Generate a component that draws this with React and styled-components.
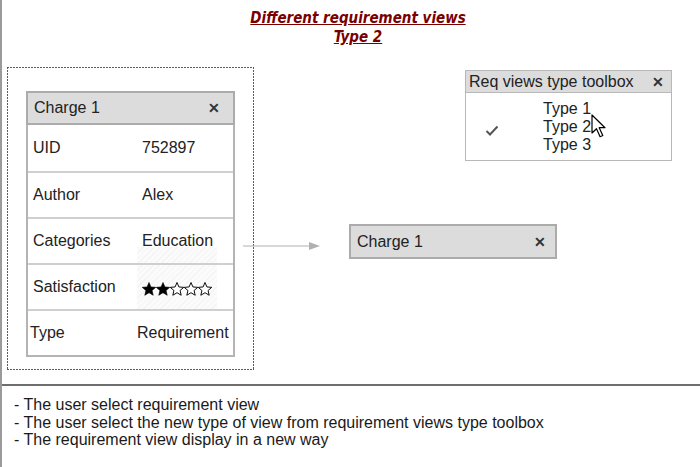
import React from "react";
import styled, { createGlobalStyle } from "styled-components";

const GlobalStyle = createGlobalStyle`
  html, body {
    margin: 0;
    padding: 0;
    background: #fff;
  }
  body {
    font-family: "Liberation Sans", Arial, sans-serif;
    color: #1a1a1a;
  }
`;

const Frame = styled.div`
  width: 700px;
  height: 467px;
  box-sizing: border-box;
  border-left: 2px solid #9a9a9a;
  display: flex;
  flex-direction: column;
  overflow: hidden;
`;

const Title = styled.h1`
  margin: 0;
  padding-top: 9px;
  height: 67px;
  box-sizing: border-box;
  text-align: center;
  padding-left: 14px;
  font-family: "Liberation Sans Narrow", "DejaVu Sans Condensed", "Liberation Sans", sans-serif;
  font-size: 15px;
  font-style: italic;
  font-weight: bold;
  line-height: 19px;
  color: #7a0000;
  text-decoration: underline;
`;

const Canvas = styled.div`
  height: 317px;
  display: flex;
  align-items: flex-start;
`;

const dotColor = "rgb(72, 72, 255)";

const DashedBox = styled.div`
  margin-left: 5px;
  width: 247px;
  height: 303px;
  flex: none;
  box-sizing: border-box;
  padding: 24px 0 0 19px;
  background-image:
    repeating-linear-gradient(to right, ${dotColor} 0px, ${dotColor} 2px, #fff 2px, #fff 3px),
    repeating-linear-gradient(to right, ${dotColor} 0px, ${dotColor} 2px, #fff 2px, #fff 3px),
    repeating-linear-gradient(to bottom, ${dotColor} 0px, ${dotColor} 2px, #fff 2px, #fff 3px),
    repeating-linear-gradient(to bottom, ${dotColor} 0px, ${dotColor} 2px, #fff 2px, #fff 3px);
  background-size: 100% 1px, 100% 1px, 1px 100%, 1px 100%;
  background-position: left top, left bottom, left top, right top;
  background-repeat: no-repeat;
`;

const Card = styled.div`
  width: 209px;
  box-sizing: border-box;
  border: 2px solid #b4b4b4;
  border-top: none;
  background: #fff;
`;

const CardHeader = styled.div`
  margin: 0 -2px;
  height: 34px;
  box-sizing: border-box;
  display: flex;
  align-items: center;
  justify-content: space-between;
  padding: 0 13px 0 6px;
  background: #dcdcdc;
  border: 2px solid #ababab;
  font-size: 16px;
  color: #222;
`;

const Close = styled.span`
  font-size: 14px;
  font-weight: bold;
  color: #333;
`;

const Row = styled.div`
  height: 46px;
  display: flex;
  align-items: center;
  border-top: ${(p) => (p.$first ? "none" : "2px solid #cfcfcf")};
  box-sizing: border-box;
  padding-left: ${(p) => (p.$shift ? "2px" : "5px")};
  font-size: 16px;
  color: #222;
  position: relative;
`;

const Label = styled.span`
  width: ${(p) => (p.$shift ? "107px" : "109px")};
`;

const Hatch = styled.div`
  position: absolute;
  left: 109px;
  top: 28px;
  width: 80px;
  height: 62px;
  background: repeating-linear-gradient(
    135deg,
    #f4f4f4 0 1px,
    #fbfbfb 1px 4px
  );
  z-index: 0;
`;

const Stars = styled.span`
  position: relative;
  z-index: 1;
  display: flex;
  padding-top: 3px;
`;

const RightArea = styled.div`
  flex: 1;
  display: flex;
  flex-direction: column;
`;

const FlowRow = styled.div`
  display: flex;
  align-items: center;
  margin-top: 63px;
`;

const ArrowWrap = styled.div`
  margin-left: -11px;
  width: 80px;
  height: 10px;
  position: relative;
  z-index: 1;
`;

const SmallCard = styled(CardHeader)`
  margin: 0 0 0 26px;
  width: 208px;
  height: 35px;
  padding: 0 9px 0 6px;
`;

const Toolbox = styled.div`
  margin: 3px 0 0 211px;
  width: 207px;
  height: 91px;
  box-sizing: border-box;
  border: 1px solid #b8b8b8;
  background: #fff;
`;

const ToolboxHeader = styled.div`
  height: 22px;
  box-sizing: border-box;
  display: flex;
  align-items: center;
  justify-content: space-between;
  padding: 0 7px 0 3px;
  background: #dcdcdc;
  border-bottom: 1px solid #b8b8b8;
  font-size: 16px;
  color: #222;
`;

const ToolboxBody = styled.div`
  display: flex;
  padding: 7px 0 0 19px;
`;

const CheckCol = styled.div`
  width: 58px;
  padding-top: 22px;
`;

const Options = styled.div`
  display: flex;
  flex-direction: column;
  font-size: 16px;
  line-height: 18px;
  color: #222;
`;

const Option = styled.span`
  position: relative;
`;

const Cursor = styled.svg`
  position: absolute;
  left: 48px;
  top: -4px;
`;

const Notes = styled.div`
  border-top: 2px solid #6e6e6e;
  padding: 10px 0 0 12px;
  font-size: 16px;
  line-height: 17.5px;
  color: #1a1a1a;
`;

function Star({ filled }) {
  return (
    <svg width="14" height="14" viewBox="1 1 22 22">
      <path
        d="M12 1.8l3 7 7.6.6-5.8 5 1.8 7.4L12 17.8 5.4 21.8l1.8-7.4-5.8-5 7.6-.6z"
        fill={filled ? "#000" : "#fff"}
        stroke="#000"
        strokeWidth={filled ? 1 : 1.5}
        strokeLinejoin="round"
      />
    </svg>
  );
}

const rows = [
  ["UID", "752897"],
  ["Author", "Alex"],
  ["Categories", "Education"],
  ["Satisfaction", null],
  ["Type", "Requirement"],
];

export default function App() {
  return (
    <Frame>
      <GlobalStyle />
      <Title>
        Different requirement views
        <br />
        Type 2
      </Title>
      <Canvas>
        <DashedBox>
          <Card>
            <CardHeader>
              Charge 1<Close>✕</Close>
            </CardHeader>
            {rows.map(([label, value], i) => (
              <Row key={label} $first={i === 0} $shift={label === "Type"}>
                {label === "Categories" && <Hatch />}
                <Label $shift={label === "Type"}>{label}</Label>
                {value !== null ? (
                  <span>{value}</span>
                ) : (
                  <Stars>
                    {[1, 2, 3, 4, 5].map((n) => (
                      <Star key={n} filled={n <= 2} />
                    ))}
                  </Stars>
                )}
              </Row>
            ))}
          </Card>
        </DashedBox>
        <RightArea>
          <Toolbox>
            <ToolboxHeader>
              Req views type toolbox<Close>✕</Close>
            </ToolboxHeader>
            <ToolboxBody>
              <CheckCol>
                <svg width="14" height="11" viewBox="0 0 14 11">
                  <path d="M1.5 6l3.5 3.5L12.5 1.5" fill="none" stroke="#555" strokeWidth="2" />
                </svg>
              </CheckCol>
              <Options>
                <Option>Type 1</Option>
                <Option>
                  Type 2
                  <Cursor width="15" height="25" viewBox="0 0 15 25">
                    <path
                      d="M1 1v18l4.5-4.3 3.6 8 2.7-1.2-3.6-7.8H14z"
                      fill="#fff"
                      stroke="#000"
                      strokeWidth="1.2"
                      strokeLinejoin="round"
                    />
                  </Cursor>
                </Option>
                <Option>Type 3</Option>
              </Options>
            </ToolboxBody>
          </Toolbox>
          <FlowRow>
            <ArrowWrap>
              <svg width="80" height="10" viewBox="0 0 80 10">
                <line x1="0" y1="5" x2="68" y2="5" stroke="#b0b0b0" strokeWidth="1" />
                <polygon points="66,1 77,5 66,9" fill="#b0b0b0" />
              </svg>
            </ArrowWrap>
            <SmallCard>
              Charge 1<Close>✕</Close>
            </SmallCard>
          </FlowRow>
        </RightArea>
      </Canvas>
      <Notes>
        - The user select requirement view
        <br />- The user select the new type of view from requirement views type toolbox
        <br />- The requirement view display in a new way
      </Notes>
    </Frame>
  );
}
